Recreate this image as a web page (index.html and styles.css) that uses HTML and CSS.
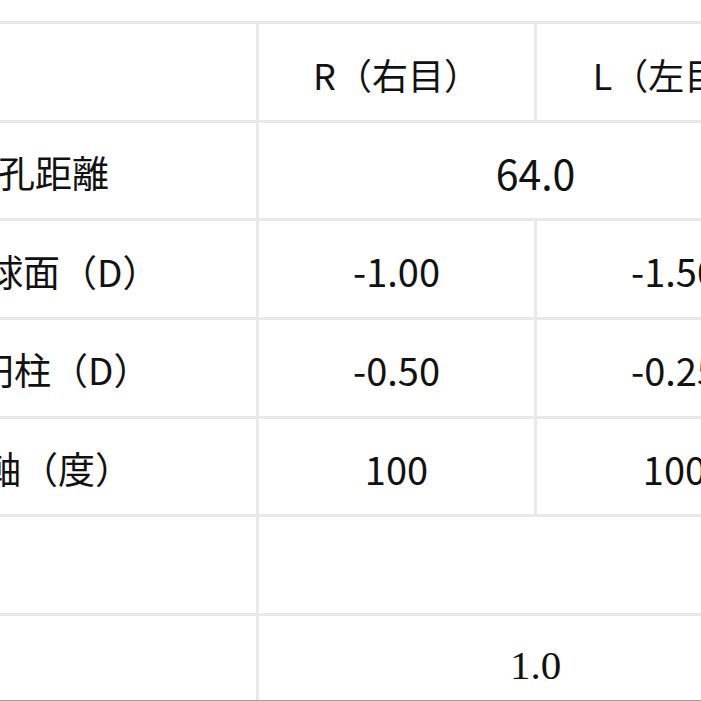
FILE: index.html
```
<!DOCTYPE html>
<html lang="ja">
<head>
<meta charset="utf-8">
<title>処方箋</title>
<link rel="stylesheet" href="styles.css">
</head>
<body>
<div class="frame">
  <div class="sheet">
    <div class="cell label"></div>
    <div class="cell head">R（右目）</div>
    <div class="cell head">L（左目）</div>

    <div class="cell label pd">瞳孔距離</div>
    <div class="cell value big span2">64.0</div>

    <div class="cell label sph">球面（D）</div>
    <div class="cell value">-1.00</div>
    <div class="cell value">-1.50</div>

    <div class="cell label cyl">円柱（D）</div>
    <div class="cell value">-0.50</div>
    <div class="cell value">-0.25</div>

    <div class="cell label axis">軸（度）</div>
    <div class="cell value">100</div>
    <div class="cell value">100</div>

    <div class="cell label"></div>
    <div class="cell value span2"></div>

    <div class="cell label"></div>
    <div class="cell value serif span2">1.0</div>
  </div>
</div>
</body>
</html>
```
FILE: styles.css
```
html, body {
  margin: 0;
  padding: 0;
  background: #ffffff;
  overflow: hidden;
}

.frame {
  width: 701px;
  height: 700px;
  overflow: hidden;
  border-bottom: 1px solid #9c9c9c;
  background: #ffffff;
}

.sheet {
  margin-top: 21px;
  margin-left: -44px;
  width: max-content;
  display: grid;
  grid-template-columns: 297px 275px 275px;
  grid-auto-rows: 95.7px;
  gap: 3px;
  padding: 3px;
  background: #e9e9e9;
  font-family: "Noto Sans CJK JP", "Noto Sans", sans-serif;
  color: #111111;
}

.cell {
  background: #ffffff;
  display: flex;
  align-items: center;
  justify-content: center;
  padding-top: 3px;
  box-sizing: border-box;
  white-space: nowrap;
}

.span2 {
  grid-column: span 2;
}

.head {
  font-size: 36px;
  padding-top: 5px;
  word-spacing: 0;
}

.head-gap {
  margin-left: 4px;
}

.label {
  justify-content: flex-start;
  font-size: 37px;
}

.pd { padding-left: 2px; }
.sph { padding-left: 27px; }
.cyl { padding-left: 18px; }
.axis { padding-left: 25px; }

.value {
  font-size: 38px;
}

.big {
  font-size: 41px;
}

.serif {
  font-family: "Liberation Serif", serif;
  font-size: 41px;
  padding-top: 2px;
}
```
